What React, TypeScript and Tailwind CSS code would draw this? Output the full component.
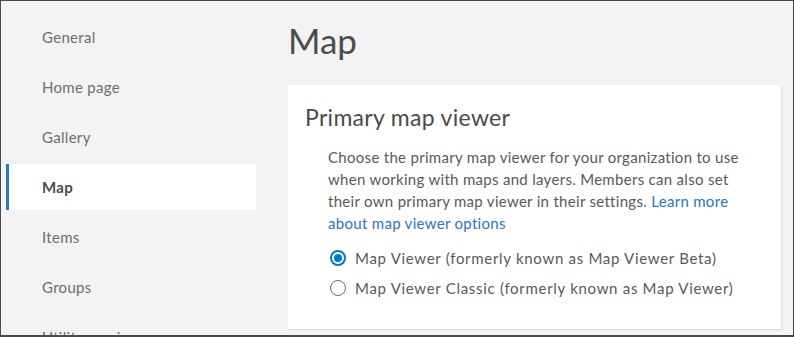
import { useState } from "react";

const navItems = ["General", "Home page", "Gallery", "Map", "Items", "Groups", "Utility services"];

function Radio({ checked }: { checked: boolean }) {
  return checked ? (
    <span className="flex h-[16px] w-[16px] shrink-0 items-center justify-center rounded-full border-[2px] border-[#007ac2] bg-white">
      <span className="h-[8px] w-[8px] rounded-full bg-[#007ac2]" />
    </span>
  ) : (
    <span className="h-[16px] w-[16px] shrink-0 rounded-full border border-[#6a6a6a] bg-white" />
  );
}

export default function App() {
  const [viewer, setViewer] = useState("new");

  return (
    <div
      className="flex h-[337px] w-[794px] overflow-hidden border border-b-2 border-[#4a4a4a] bg-[#f3f3f3]"
      style={{ fontFamily: "Lato, 'Open Sans', sans-serif" }}
    >
      <nav className="ml-[5px] w-[250px] shrink-0 pt-[13px]">
        {navItems.map((item) => {
          const active = item === "Map";
          return (
            <div
              key={item}
              className={`mb-[4px] flex h-[46px] items-center border-l-[3px] pl-[33px] text-[15px] tracking-[0.3px] whitespace-nowrap ${
                active
                  ? "border-[#2477c9] bg-white font-bold text-[#4c4c4c]"
                  : "border-transparent text-[#6e6e6e]"
              }`}
            >
              {item}
            </div>
          );
        })}
      </nav>

      <main className="flex-1 pl-[32px] pr-[12px]">
        <h1 className="mt-[18px] text-[35px] leading-[42px] font-normal text-[#4c4c4c]">Map</h1>
        <section className="mt-[24px] bg-white pt-[17px] pr-[20px] pb-[30px] pl-[17px] shadow-[1px_1px_2px_rgba(0,0,0,0.12)]">
          <h2 className="text-[23px] leading-[30px] tracking-[0.3px] text-[#4a4a4a]">Primary map viewer</h2>
          <p className="mt-[14px] ml-[23px] w-[420px] text-[15px] leading-[22px] tracking-[0.3px] text-[#595959]">
            Choose the primary map viewer for your organization to use when working with maps and
            layers. Members can also set their own primary map viewer in their settings.{" "}
            <a href="#" className="text-[#2477c9]">
              Learn more about map viewer options
            </a>
          </p>
          <div className="mt-[13px] ml-[25px] flex flex-col gap-[8px] text-[15px] tracking-[0.7px] text-[#595959]">
            <label className="flex items-center gap-[9px] leading-[22px]" onClick={() => setViewer("new")}>
              <Radio checked={viewer === "new"} />
              Map Viewer (formerly known as Map Viewer Beta)
            </label>
            <label className="flex items-center gap-[9px] leading-[22px]" onClick={() => setViewer("classic")}>
              <Radio checked={viewer === "classic"} />
              Map Viewer Classic (formerly known as Map Viewer)
            </label>
          </div>
        </section>
      </main>
    </div>
  );
}
